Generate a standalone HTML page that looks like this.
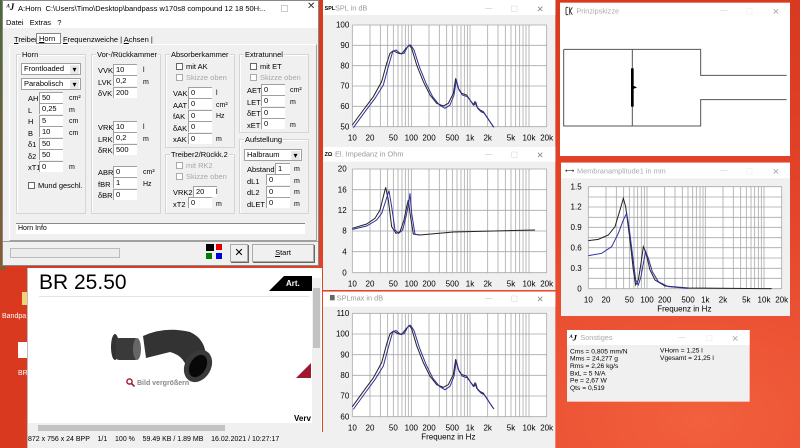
<!DOCTYPE html>
<html><head><meta charset="utf-8"><style>
*{margin:0;padding:0;box-sizing:border-box}
body{width:800px;height:448px;overflow:hidden;position:relative;font-family:"Liberation Sans",sans-serif;font-size:8px;color:#000;
background:radial-gradient(ellipse at 700px 420px,#f2603d 0,#e5452a 35%,#d8391f 70%),#e0452a}
.a{position:absolute}
.l{position:absolute;font-size:7.5px;line-height:9px;white-space:nowrap}
.i{position:absolute;background:#fff;border-top:1px solid #a0a0a0;border-left:1px solid #a0a0a0;height:11px;width:24px;font-size:7.5px;line-height:10px;padding-left:2px}
.g{position:absolute;border:1px solid #d5d5d5;box-shadow:inset 1px 1px 0 #fff}
.gt{position:absolute;top:-5px;left:4px;background:#f0f0f0;font-size:7.5px;line-height:9px;padding:0 1px}
.c{position:absolute;background:#fff;border:1px solid #a0a0a0;height:12px;font-size:7.5px;line-height:10px;padding-left:2px}
.c:after{content:"▾";position:absolute;right:1px;top:1px;width:9px;height:9px;background:#e8e8e8;font-size:8px;line-height:9px;text-align:center}
.cb{position:absolute;width:7px;height:7px;border:1px solid #666;background:#fff}
.gr{color:#a8a8a8}
</style></head><body>
<div class="a" style="left:0;top:0;width:6px;height:270px;background:linear-gradient(#4a6a3a,#8a5a30)"></div>
<div class="a" style="left:22px;top:292px;width:6px;height:13px;background:#f2d27a"></div>
<div class="l" style="left:2px;top:312px;color:#fff;font-size:7px">Bandpa</div>
<div class="a" style="left:18px;top:342px;width:9px;height:16px;background:#fff"></div>
<div class="l" style="left:18px;top:369px;color:#fff;font-size:7px">BR</div>

<div class="a" style="left:2px;top:0;width:317px;height:266px;background:#f0f0f0;border:1px solid #888">
 <div class="a" style="left:0;top:0;width:315px;height:14px;background:#fff"></div>
 <div class="l" style="left:3px;top:2px;font-family:'Liberation Serif',serif;font-style:italic;font-weight:bold;font-size:9px">ᴬJ</div>
 <div class="l" style="left:15px;top:3px;font-size:7.5px">A:Horn&nbsp; C:\Users\Timo\Desktop\bandpass w170s8 compound 12 18 50H...</div>
 <div class="l" style="left:250px;top:2px;color:#777">—</div>
 <div class="a" style="left:278px;top:4px;width:7px;height:7px;border:1px solid #ccc"></div>
 <div class="l" style="left:304px;top:1px;font-size:10px;color:#333">✕</div>
 <div class="a" style="left:0;top:14px;width:315px;height:13px;background:#fff"></div>
 <div class="l" style="left:3px;top:17px">Datei&nbsp;&nbsp; Extras&nbsp;&nbsp; ?</div>
 <div class="l" style="left:11px;top:34px"><u>T</u>reiber</div>
 <div class="a" style="left:33px;top:32px;width:25px;height:11px;border:1px solid #888;background:#fff"></div>
 <div class="l" style="left:36px;top:33px"><u>H</u>orn</div>
 <div class="l" style="left:60px;top:34px"><u>F</u>requenzweiche | <u>A</u>chsen |</div>
 <div class="a" style="left:6px;top:43px;width:308px;height:197px;border:1px solid #fff;border-right-color:#a0a0a0;border-bottom-color:#a0a0a0"></div>

 <div class="g" style="left:13px;top:53px;width:70px;height:160px"><div class="gt">Horn</div></div>
 <div class="c" style="left:18px;top:62px;width:60px">Frontloaded</div>
 <div class="c" style="left:18px;top:77px;width:60px">Parabolisch</div>
 <div class="a" style="left:25px;top:92px;line-height:11.5px;font-size:7.5px">AH<br>L<br>H<br>B<br>δ1<br>δ2<br>xT1</div>
 <div class="i" style="left:36px;top:91px">50</div><div class="i" style="left:36px;top:102px">0,25</div><div class="i" style="left:36px;top:114px">5</div><div class="i" style="left:36px;top:125px">10</div><div class="i" style="left:36px;top:137px">50</div><div class="i" style="left:36px;top:148px">50</div><div class="i" style="left:36px;top:160px">0</div>
 <div class="a" style="left:66px;top:92px;line-height:11.5px;font-size:7px">cm²<br>m<br>cm<br>cm<br><br><br>m</div>
 <div class="cb" style="left:25px;top:181px"></div><div class="l" style="left:35px;top:180px">Mund geschl.</div>

 <div class="g" style="left:88px;top:53px;width:70px;height:160px"><div class="gt">Vor-/Rückkammer</div></div>
 <div class="a" style="left:95px;top:64px;line-height:11.5px;font-size:7.5px">VVK<br>LVK<br>δVK</div>
 <div class="i" style="left:110px;top:63px">10</div><div class="i" style="left:110px;top:74px">0,2</div><div class="i" style="left:110px;top:86px">200</div>
 <div class="a" style="left:140px;top:64px;line-height:11.5px;font-size:7px">l<br>m</div>
 <div class="a" style="left:95px;top:121px;line-height:11.5px;font-size:7.5px">VRK<br>LRK<br>δRK</div>
 <div class="i" style="left:110px;top:120px">10</div><div class="i" style="left:110px;top:131px">0,2</div><div class="i" style="left:110px;top:143px">500</div>
 <div class="a" style="left:140px;top:121px;line-height:11.5px;font-size:7px">l<br>m</div>
 <div class="a" style="left:95px;top:166px;line-height:11.5px;font-size:7.5px">ABR<br>fBR<br>δBR</div>
 <div class="i" style="left:110px;top:165px">0</div><div class="i" style="left:110px;top:176px">1</div><div class="i" style="left:110px;top:188px">0</div>
 <div class="a" style="left:140px;top:166px;line-height:11.5px;font-size:7px">cm²<br>Hz</div>

 <div class="g" style="left:162px;top:53px;width:70px;height:94px"><div class="gt">Absorberkammer</div></div>
 <div class="cb" style="left:173px;top:62px"></div><div class="l" style="left:183px;top:61px">mit AK</div>
 <div class="cb" style="left:173px;top:73px;border-color:#aaa"></div><div class="l gr" style="left:183px;top:72px">Skizze oben</div>
 <div class="a" style="left:170px;top:87px;line-height:11.5px;font-size:7.5px">VAK<br>AAT<br>fAK<br>δAK<br>xAK</div>
 <div class="i" style="left:185px;top:86px">0</div><div class="i" style="left:185px;top:97px">0</div><div class="i" style="left:185px;top:109px">0</div><div class="i" style="left:185px;top:120px">0</div><div class="i" style="left:185px;top:132px">0</div>
 <div class="a" style="left:213px;top:87px;line-height:11.5px;font-size:7px">l<br>cm²<br>Hz<br><br>m</div>

 <div class="g" style="left:162px;top:153px;width:70px;height:60px"><div class="gt">Treiber2/Rückk.2</div></div>
 <div class="cb" style="left:173px;top:161px;border-color:#aaa"></div><div class="l gr" style="left:183px;top:160px">mit RK2</div>
 <div class="cb" style="left:173px;top:172px;border-color:#aaa"></div><div class="l gr" style="left:183px;top:171px">Skizze oben</div>
 <div class="a" style="left:170px;top:186px;line-height:11.5px;font-size:7.5px">VRK2<br>xT2</div>
 <div class="i" style="left:190px;top:185px">20</div><div class="i" style="left:185px;top:196px">0</div>
 <div class="a" style="left:213px;top:186px;line-height:11.5px;font-size:7px">l<br>m</div>

 <div class="g" style="left:236px;top:53px;width:70px;height:79px"><div class="gt">Extratunnel</div></div>
 <div class="cb" style="left:247px;top:62px"></div><div class="l" style="left:257px;top:61px">mit ET</div>
 <div class="cb" style="left:247px;top:73px;border-color:#aaa"></div><div class="l gr" style="left:257px;top:72px">Skizze oben</div>
 <div class="a" style="left:244px;top:84px;line-height:11.5px;font-size:7.5px">AET<br>LET<br>δET<br>xET</div>
 <div class="i" style="left:258px;top:83px">0</div><div class="i" style="left:258px;top:94px">0</div><div class="i" style="left:258px;top:106px">0</div><div class="i" style="left:258px;top:117px">0</div>
 <div class="a" style="left:287px;top:84px;line-height:11.5px;font-size:7px">cm²<br>m<br><br>m</div>

 <div class="g" style="left:236px;top:138px;width:70px;height:75px"><div class="gt">Aufstellung</div></div>
 <div class="c" style="left:241px;top:148px;width:58px">Halbraum</div>
 <div class="a" style="left:244px;top:163px;line-height:11.5px;font-size:7.5px">Abstand<br>dL1<br>dL2<br>dLET</div>
 <div class="i" style="left:272px;top:162px;width:15px">1</div><div class="i" style="left:263px;top:173px">0</div><div class="i" style="left:263px;top:185px">0</div><div class="i" style="left:263px;top:196px">0</div>
 <div class="a" style="left:291px;top:163px;line-height:11.5px;font-size:7px">m<br>m<br>m<br>m</div>

 <div class="a" style="left:13px;top:222px;width:289px;height:11px;background:#fff;border-top:1px solid #888;font-size:7px;line-height:10px;padding-left:2px">Horn Info</div>
 <div class="a" style="left:0;top:240px;width:315px;height:1px;background:#a0a0a0"></div>
 <div class="a" style="left:7px;top:247px;width:110px;height:10px;border:1px solid #bbb;background:#ececec"></div>
 <div class="a" style="left:203px;top:243px;width:8px;height:7px;background:#000"></div>
 <div class="a" style="left:213px;top:243px;width:6px;height:6px;background:#e00000"></div>
 <div class="a" style="left:203px;top:252px;width:6px;height:6px;background:#008000"></div>
 <div class="a" style="left:213px;top:252px;width:6px;height:6px;background:#0000e0"></div>
 <div class="a" style="left:227px;top:243px;width:18px;height:18px;border:1px solid #aaa;box-shadow:1px 1px 0 #666;font-size:11px;line-height:16px;text-align:center">✕</div>
 <div class="a" style="left:249px;top:243px;width:62px;height:18px;border:1px solid #aaa;box-shadow:1px 1px 0 #666;font-size:7.5px;line-height:16px;text-align:center"><u>S</u>tart</div>
</div>

<div class="a" style="left:27px;top:268px;width:295px;height:180px;background:#fff;border-left:1px solid #bbb">
 <div class="l" style="left:11px;top:3px;font-size:21px;line-height:24px">BR 25.50</div>
 <div class="a" style="left:11px;top:28px;width:270px;height:1px;background:#e4e4e4"></div>
 <div class="a" style="left:241px;top:8px;width:0;height:0;border-bottom:15px solid #000;border-left:15px solid transparent"></div>
 <div class="a" style="left:256px;top:8px;width:28px;height:15px;background:#000;color:#fff;font-weight:bold;font-size:8px;line-height:15px;padding-left:2px;overflow:hidden">Art. No</div>
 <div class="a" style="left:268px;top:95px;width:0;height:0;border-bottom:15px solid #a01830;border-left:15px solid transparent"></div>
 <svg class="a" style="left:82px;top:60px" width="110" height="56" viewBox="0 0 110 56">
  <ellipse cx="5" cy="19" rx="4" ry="13" fill="#333"/>
  <rect x="6" y="10" width="22" height="22" rx="3" fill="#3a3a3a"/>
  <ellipse cx="27" cy="21" rx="4" ry="11" fill="#666"/>
  <path d="M33 8 Q55 -2 80 4 Q98 12 96 36 L78 46 Q76 28 60 24 L36 30 Z" fill="#333"/>
  <ellipse cx="88" cy="38" rx="13" ry="17" transform="rotate(30 88 38)" fill="#3a3a3a"/>
  <ellipse cx="88" cy="38" rx="8" ry="12" transform="rotate(30 88 38)" fill="#080808"/>
 </svg>
 <svg class="a" style="left:98px;top:110px" width="9" height="9" viewBox="0 0 9 9"><circle cx="3.5" cy="3.5" r="2.6" fill="none" stroke="#a01830" stroke-width="1.4"/><path d="M5.5 5.5L8.5 8.5" stroke="#a01830" stroke-width="1.6"/></svg>
 <div class="l" style="left:109px;top:111px;color:#888;font-size:7px;font-weight:bold">Bild vergrößern</div>
 <div class="l" style="left:266px;top:146px;font-weight:bold;font-size:8px">Verv</div>
 <div class="a" style="left:284px;top:10px;width:9px;height:146px;background:#f0f0f0"></div>
 <div class="a" style="left:285px;top:20px;width:7px;height:60px;background:#c2c2c2"></div>
 <div class="a" style="left:0;top:155px;width:293px;height:9px;background:#f0f0f0"></div>
 <div class="a" style="left:10px;top:157px;width:187px;height:6px;background:#c2c2c2"></div>
 <div class="a" style="left:0;top:164px;width:295px;height:16px;background:#f0f0f0;font-size:7px;line-height:16px;white-space:nowrap">872 x 756 x 24 BPP &nbsp;&nbsp; 1/1 &nbsp;&nbsp; 100 % &nbsp;&nbsp; 59.49 KB / 1.89 MB &nbsp;&nbsp; 16.02.2021 / 10:27:17</div>
</div>

<svg class="a" style="left:320px;top:0" width="240" height="448" viewBox="0 0 720 1344" font-family="Liberation Sans, sans-serif">
 <defs>
  <g id="vg" stroke="#a8a8a8" stroke-width="2.4">
   <path d="M97 0V1M150 0V1M181 0V1M203 0V1M220 0V1M234 0V1M246 0V1M256 0V1M265 0V1M274 0V1M327 0V1M358 0V1M380 0V1M397 0V1M411 0V1M423 0V1M433 0V1M442 0V1M450 0V1M503 0V1M534 0V1M556 0V1M573 0V1M587 0V1M599 0V1M609 0V1M618 0V1M627 0V1M680 0V1"/>
  </g>
  <g id="xl" font-size="24" text-anchor="middle"><text x="97">10</text><text x="150">20</text><text x="220">50</text><text x="274">100</text><text x="327">200</text><text x="397">500</text><text x="450">1k</text><text x="503">2k</text><text x="573">5k</text><text x="627">10k</text><text x="680">20k</text></g>
  <polyline id="sb" fill="none" stroke="#222" stroke-width="3" points="97,375 130,330 160,290 185,245 200,190 210,160 220,152 235,160 245,162 258,145 268,135 275,145 290,195 310,245 330,285 350,310 370,318 385,310 400,280 407,235 415,265 425,280 440,285 450,300 460,315 465,305 470,320 480,330 490,335 500,350 510,365 520,380"/>
  <polyline id="su" fill="none" stroke="#3030a0" stroke-width="3" points="100,383 135,335 165,295 190,255 205,200 218,155 228,150 240,160 252,160 263,140 272,135 282,150 298,200 318,250 338,290 358,315 375,325 390,315 402,285 409,240 417,270 427,285 442,290 452,303 462,315 468,308 473,325 483,335 493,340 503,355 513,370 522,382"/>
 </defs>
 <rect x="9" y="0" width="697" height="440" fill="#f0f0f0"/>
 <rect x="9" y="0" width="697" height="45" fill="#fff"/>
 <text x="14" y="30" font-size="16" font-weight="bold">SPL</text><text x="45" y="31" font-size="22" fill="#999">SPL in dB</text>
 <text x="495" y="30" font-size="22" fill="#bbb">—</text><rect x="575" y="18" width="16" height="16" fill="none" stroke="#ddd" stroke-width="2"/><text x="650" y="36" font-size="26" fill="#888">✕</text>
 <rect x="97" y="75" width="583" height="305" fill="#fff"/>
 <use href="#vg" transform="matrix(1,0,0,305,0,75)"/>
 <path d="M97 75H680M97 136H680M97 197H680M97 258H680M97 319H680M97 380H680" stroke="#a8a8a8" stroke-width="2.4"/>
 <g font-size="24" text-anchor="end"><text x="88" y="83">100</text><text x="88" y="144">90</text><text x="88" y="205">80</text><text x="88" y="266">70</text><text x="88" y="327">60</text><text x="88" y="388">50</text></g>
 <use href="#xl" y="422"/>
 <use href="#sb"/><use href="#su"/>
 <rect x="9" y="440" width="697" height="430" fill="#f0f0f0"/>
 <rect x="9" y="440" width="697" height="45" fill="#fff"/>
 <text x="14" y="468" font-size="16" font-weight="bold">ΖΩ</text><text x="45" y="470" font-size="22" fill="#999">El. Impedanz in Ohm</text>
 <text x="495" y="468" font-size="22" fill="#bbb">—</text><rect x="575" y="456" width="16" height="16" fill="none" stroke="#ddd" stroke-width="2"/><text x="650" y="474" font-size="26" fill="#888">✕</text>
 <rect x="97" y="507" width="583" height="311" fill="#fff"/>
 <use href="#vg" transform="matrix(1,0,0,311,0,507)"/>
 <path d="M97 507H680M97 569H680M97 631H680M97 693H680M97 755H680M97 818H680" stroke="#a8a8a8" stroke-width="2.4"/>
 <g font-size="24" text-anchor="end"><text x="80" y="515">20</text><text x="80" y="577">16</text><text x="80" y="639">12</text><text x="80" y="701">8</text><text x="80" y="763">4</text><text x="80" y="826">0</text></g>
 <use href="#xl" y="860"/>
 <polyline fill="none" stroke="#222" stroke-width="3" points="97,685 140,672 165,655 180,630 190,590 197,562 205,600 215,680 228,700 240,695 252,660 260,620 265,600 270,640 280,702 300,705 400,696 645,690"/>
 <polyline fill="none" stroke="#3030a0" stroke-width="3" points="97,688 140,678 170,660 185,640 198,600 207,572 215,620 225,690 236,700 248,690 258,650 266,610 270,580 275,640 285,703 300,705"/>
 <rect x="9" y="875" width="697" height="469" fill="#f0f0f0"/>
 <rect x="9" y="875" width="697" height="45" fill="#fff"/>
 <rect x="30" y="885" width="14" height="16" fill="#666"/><text x="50" y="902" font-size="22" fill="#999">SPLmax in dB</text>
 <text x="495" y="900" font-size="22" fill="#bbb">—</text><rect x="575" y="888" width="16" height="16" fill="none" stroke="#ddd" stroke-width="2"/><text x="650" y="906" font-size="26" fill="#888">✕</text>
 <rect x="97" y="940" width="583" height="310" fill="#fff"/>
 <use href="#vg" transform="matrix(1,0,0,310,0,940)"/>
 <path d="M97 940H680M97 1002H680M97 1064H680M97 1126H680M97 1188H680M97 1250H680" stroke="#a8a8a8" stroke-width="2.4"/>
 <g font-size="24" text-anchor="end"><text x="88" y="948">110</text><text x="88" y="1010">100</text><text x="88" y="1072">90</text><text x="88" y="1134">80</text><text x="88" y="1196">70</text><text x="88" y="1258">60</text></g>
 <use href="#xl" y="1292"/>
 <text x="385" y="1318" font-size="24" text-anchor="middle">Frequenz in Hz</text>
 <g transform="matrix(1,0,0,1.016,0,839)"><use href="#sb"/><use href="#su"/></g>
</svg>

<svg class="a" style="left:555px;top:0" width="245" height="448" viewBox="0 0 735 1344" font-family="Liberation Sans, sans-serif">
 <rect x="15" y="8" width="690" height="460" fill="#fff"/>
 <path d="M33 22V44M33 22H40M33 44H40M44 22V44M52 22L45 33L52 44" stroke="#222" stroke-width="2.5" fill="none"/>
 <text x="64" y="40" font-size="22" fill="#aaa">Prinzipskizze</text>
 <text x="495" y="38" font-size="22" fill="#ccc">—</text><rect x="575" y="26" width="16" height="16" fill="none" stroke="#eee" stroke-width="2"/><text x="652" y="44" font-size="26" fill="#aaa">✕</text>
 <path d="M26 148H437V226H695M26 148V378H437V299H695M232 148V378" fill="none" stroke="#555" stroke-width="3"/>
 <path d="M232 205V320" stroke="#000" stroke-width="8"/><path d="M232 256L246 262L232 268Z" fill="#000"/>

 <rect x="18" y="488" width="687" height="460" fill="#f0f0f0"/>
 <rect x="18" y="488" width="687" height="47" fill="#fff"/>
 <text x="30" y="519" font-size="20">⟷</text><text x="66" y="520" font-size="22" fill="#aaa">Membranamplitude1 in mm</text>
 <text x="495" y="518" font-size="22" fill="#ccc">—</text><rect x="575" y="506" width="16" height="16" fill="none" stroke="#eee" stroke-width="2"/><text x="652" y="524" font-size="26" fill="#aaa">✕</text>
 <rect x="100" y="560" width="580" height="306" fill="#fff"/>
 <g stroke="#a8a8a8" stroke-width="2.4">
 <path d="M100 560V866M153 560V866M184 560V866M206 560V866M223 560V866M237 560V866M248 560V866M259 560V866M268 560V866M276 560V866M329 560V866M360 560V866M382 560V866M399 560V866M413 560V866M424 560V866M435 560V866M444 560V866M451 560V866M504 560V866M535 560V866M557 560V866M574 560V866M588 560V866M599 560V866M610 560V866M619 560V866M627 560V866M680 560V866"/>
 <path d="M100 560H680M100 591H680M100 621H680M100 652H680M100 682H680M100 713H680M100 743H680M100 774H680M100 805H680M100 835H680M100 866H680"/>
 </g>
 <g font-size="24" text-anchor="end"><text x="80" y="568">1.5</text><text x="80" y="629">1.2</text><text x="80" y="690">0.9</text><text x="80" y="751">0.6</text><text x="80" y="813">0.3</text><text x="80" y="874">0</text></g>
 <g font-size="24" text-anchor="middle"><text x="100" y="908">10</text><text x="153" y="908">20</text><text x="223" y="908">50</text><text x="276" y="908">100</text><text x="329" y="908">200</text><text x="399" y="908">500</text><text x="451" y="908">1k</text><text x="504" y="908">2k</text><text x="574" y="908">5k</text><text x="627" y="908">10k</text><text x="680" y="908">20k</text></g>
 <text x="388" y="934" font-size="24" text-anchor="middle">Frequenz in Hz</text>
 <polyline fill="none" stroke="#222" stroke-width="3" points="100,722 130,718 160,705 180,680 195,630 205,595 212,620 225,720 235,810 242,855 250,840 258,790 265,740 272,755 285,810 300,840 330,858 400,864 650,866"/>
 <polyline fill="none" stroke="#3030a0" stroke-width="3" points="100,767 140,760 170,740 190,700 205,660 215,640 222,680 232,760 242,840 250,855 258,830 265,790 272,755 280,775 292,815 310,845 340,860 400,865"/>

 <rect x="36" y="990" width="548" height="215" fill="#f0f0f0"/>
 <rect x="36" y="990" width="548" height="45" fill="#fff"/>
 <text x="42" y="1022" font-size="26" font-style="italic" font-weight="bold" font-family="Liberation Serif, serif">ᴬJ</text>
 <text x="76" y="1020" font-size="22" fill="#aaa">Sonstiges</text>
 <text x="370" y="1018" font-size="22" fill="#ccc">—</text><rect x="455" y="1006" width="16" height="16" fill="none" stroke="#eee" stroke-width="2"/><text x="530" y="1024" font-size="26" fill="#aaa">✕</text>
 <g font-size="20"><text x="45" y="1060">Cms = 0,805 mm/N</text><text x="45" y="1082">Mms = 24,277 g</text><text x="45" y="1104">Rms = 2,26 kg/s</text><text x="45" y="1126">BxL = 5 N/A</text><text x="45" y="1148">Pe = 2,67 W</text><text x="45" y="1170">Qts = 0,519</text>
 <text x="315" y="1058">VHorn = 1,25 l</text><text x="315" y="1080">Vgesamt = 21,25 l</text></g>
</svg>
</body></html>
